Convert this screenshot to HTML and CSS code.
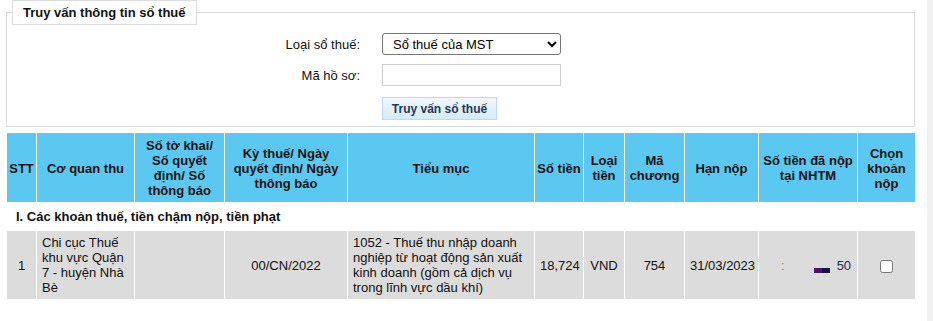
FILE: index.html
```html
<!DOCTYPE html>
<html lang="vi">
<head>
  <meta charset="UTF-8">
  <meta name="viewport" content="width=device-width, initial-scale=1.0">
  <title>Truy vấn thông tin sổ thuế</title>
  <link rel="stylesheet" href="styles.css">
</head>
<body>
  <div class="page">
    <main class="content">
      <fieldset class="query-box">
        <legend>Truy vấn thông tin sổ thuế</legend>
        <div class="query-form">
          <label for="loai">Loại sổ thuế:</label>
          <select id="loai">
            <option>Sổ thuế của MST</option>
            <option>Sổ thuế của hồ sơ</option>
          </select>

          <label for="mahs">Mã hồ sơ:</label>
          <input type="text" id="mahs">

          <span></span>
          <button type="button">Truy vấn sổ thuế</button>
        </div>
      </fieldset>

      <table class="tax-table">
        <colgroup>
          <col class="c-stt">
          <col class="c-cq">
          <col class="c-so">
          <col class="c-ky">
          <col class="c-tm">
          <col class="c-tien">
          <col class="c-loai">
          <col class="c-chuong">
          <col class="c-han">
          <col class="c-danop">
          <col class="c-chon">
        </colgroup>
        <thead>
          <tr>
            <th class="tight">STT</th>
            <th>Cơ quan thu</th>
            <th>Số tờ khai/ Số quyết định/ Số thông báo</th>
            <th>Kỳ thuế/ Ngày quyết định/ Ngày thông báo</th>
            <th>Tiểu mục</th>
            <th class="tight">Số tiền</th>
            <th>Loại tiền</th>
            <th>Mã chương</th>
            <th>Hạn nộp</th>
            <th>Số tiền đã nộp tại NHTM</th>
            <th>Chọn khoản nộp</th>
          </tr>
        </thead>
        <tbody>
          <tr class="section-row">
            <td colspan="11">I. Các khoản thuế, tiền chậm nộp, tiền phạt</td>
          </tr>
          <tr class="data-row">
            <td class="center">1</td>
            <td>Chi cục Thuế khu vực Quận 7 - huyện Nhà Bè</td>
            <td></td>
            <td class="center">00/CN/2022</td>
            <td>1052 - Thuế thu nhập doanh nghiệp từ hoạt động sản xuất kinh doanh (gồm cả dịch vụ trong lĩnh vực dầu khí)</td>
            <td class="center">18,724</td>
            <td class="center">VND</td>
            <td class="center">754</td>
            <td class="center">31/03/2023</td>
            <td class="masked"><span class="mask-dot">:</span><span class="mask-bar"></span><span class="mask-tail">50</span></td>
            <td class="center"><input type="checkbox"></td>
          </tr>
        </tbody>
      </table>
    </main>
    <div class="scroll-strip"></div>
  </div>
</body>
</html>
```

FILE: styles.css
```css
body {
  margin: 0;
  font-family: "Liberation Sans", Arial, sans-serif;
  font-size: 13px;
  color: #111;
  background: #fff;
}

.page {
  display: flex;
  min-height: 100vh;
}

.content {
  width: 909px;
  margin-left: 6px;
}

.scroll-strip {
  width: 6px;
  margin-left: auto;
  background: #f1f1f1;
}

/* khung truy van */
.query-box {
  margin: 0;
  padding: 0 5px 6px;
  border: 1px solid #dadada;
}

.query-box legend {
  padding: 4px 10px;
  border: 1px solid #dcdcdc;
  font-weight: bold;
  line-height: 15px;
  color: #111;
}

.query-form {
  display: grid;
  grid-template-columns: 348px 179px;
  column-gap: 22px;
  row-gap: 9px;
  align-items: center;
  margin-top: 8px;
}

.query-form label {
  text-align: right;
}

.query-form select {
  width: 179px;
  height: 22px;
  padding: 0 0 0 6px;
  font-family: inherit;
  font-size: 13px;
  color: #000;
  background: #fff;
  border: 1px solid #767676;
  border-radius: 3px;
}

.query-form input[type="text"] {
  width: 179px;
  height: 22px;
  box-sizing: border-box;
  border: 1px solid #cfcfcf;
  margin: 0;
}

.query-form button {
  width: 115px;
  height: 23px;
  margin-top: 2px;
  padding: 0;
  font-family: inherit;
  font-size: 12px;
  font-weight: bold;
  color: #1d3a5a;
  background: linear-gradient(#f0f7fe, #d7eafb);
  border: 1px solid #bcdaf3;
  cursor: pointer;
}

/* bang so thue */
.tax-table {
  width: 909px;
  margin-top: 5px;
  border-collapse: collapse;
  table-layout: fixed;
  line-height: 15px;
}

.c-stt { width: 30px; }
.c-cq { width: 98px; }
.c-so { width: 90px; }
.c-ky { width: 123px; }
.c-tm { width: 187px; }
.c-tien { width: 49px; }
.c-loai { width: 41px; }
.c-chuong { width: 60px; }
.c-han { width: 74px; }
.c-danop { width: 99px; }
.c-chon { width: 58px; }

.tax-table th,
.tax-table td {
  border: 1px solid #fff;
}

.tax-table th {
  padding: 5px 3px 4px;
  background: #5bc8f2;
  font-weight: bold;
  color: #111;
  text-align: center;
  vertical-align: middle;
}

.tax-table th.tight {
  padding-left: 0;
  padding-right: 0;
  white-space: nowrap;
}

.section-row td {
  padding: 6px 9px;
  font-weight: bold;
  background: #fff;
}

.data-row td {
  padding: 4px 5px;
  background: #dcdcdc;
  vertical-align: middle;
}

.data-row td.center {
  text-align: center;
}

.data-row input[type="checkbox"] {
  margin: 0;
  width: 13px;
  height: 13px;
  vertical-align: middle;
}

.masked {
  white-space: nowrap;
}

.mask-dot {
  margin-left: 17px;
  color: #9a8a30;
}

.mask-bar {
  display: inline-block;
  width: 16px;
  height: 5px;
  margin-left: 29px;
  vertical-align: -3px;
  background: linear-gradient(90deg, #4a1170 50%, #170f4c 50%);
}

.mask-tail {
  margin-left: 7px;
  color: #1d2a55;
}
```
